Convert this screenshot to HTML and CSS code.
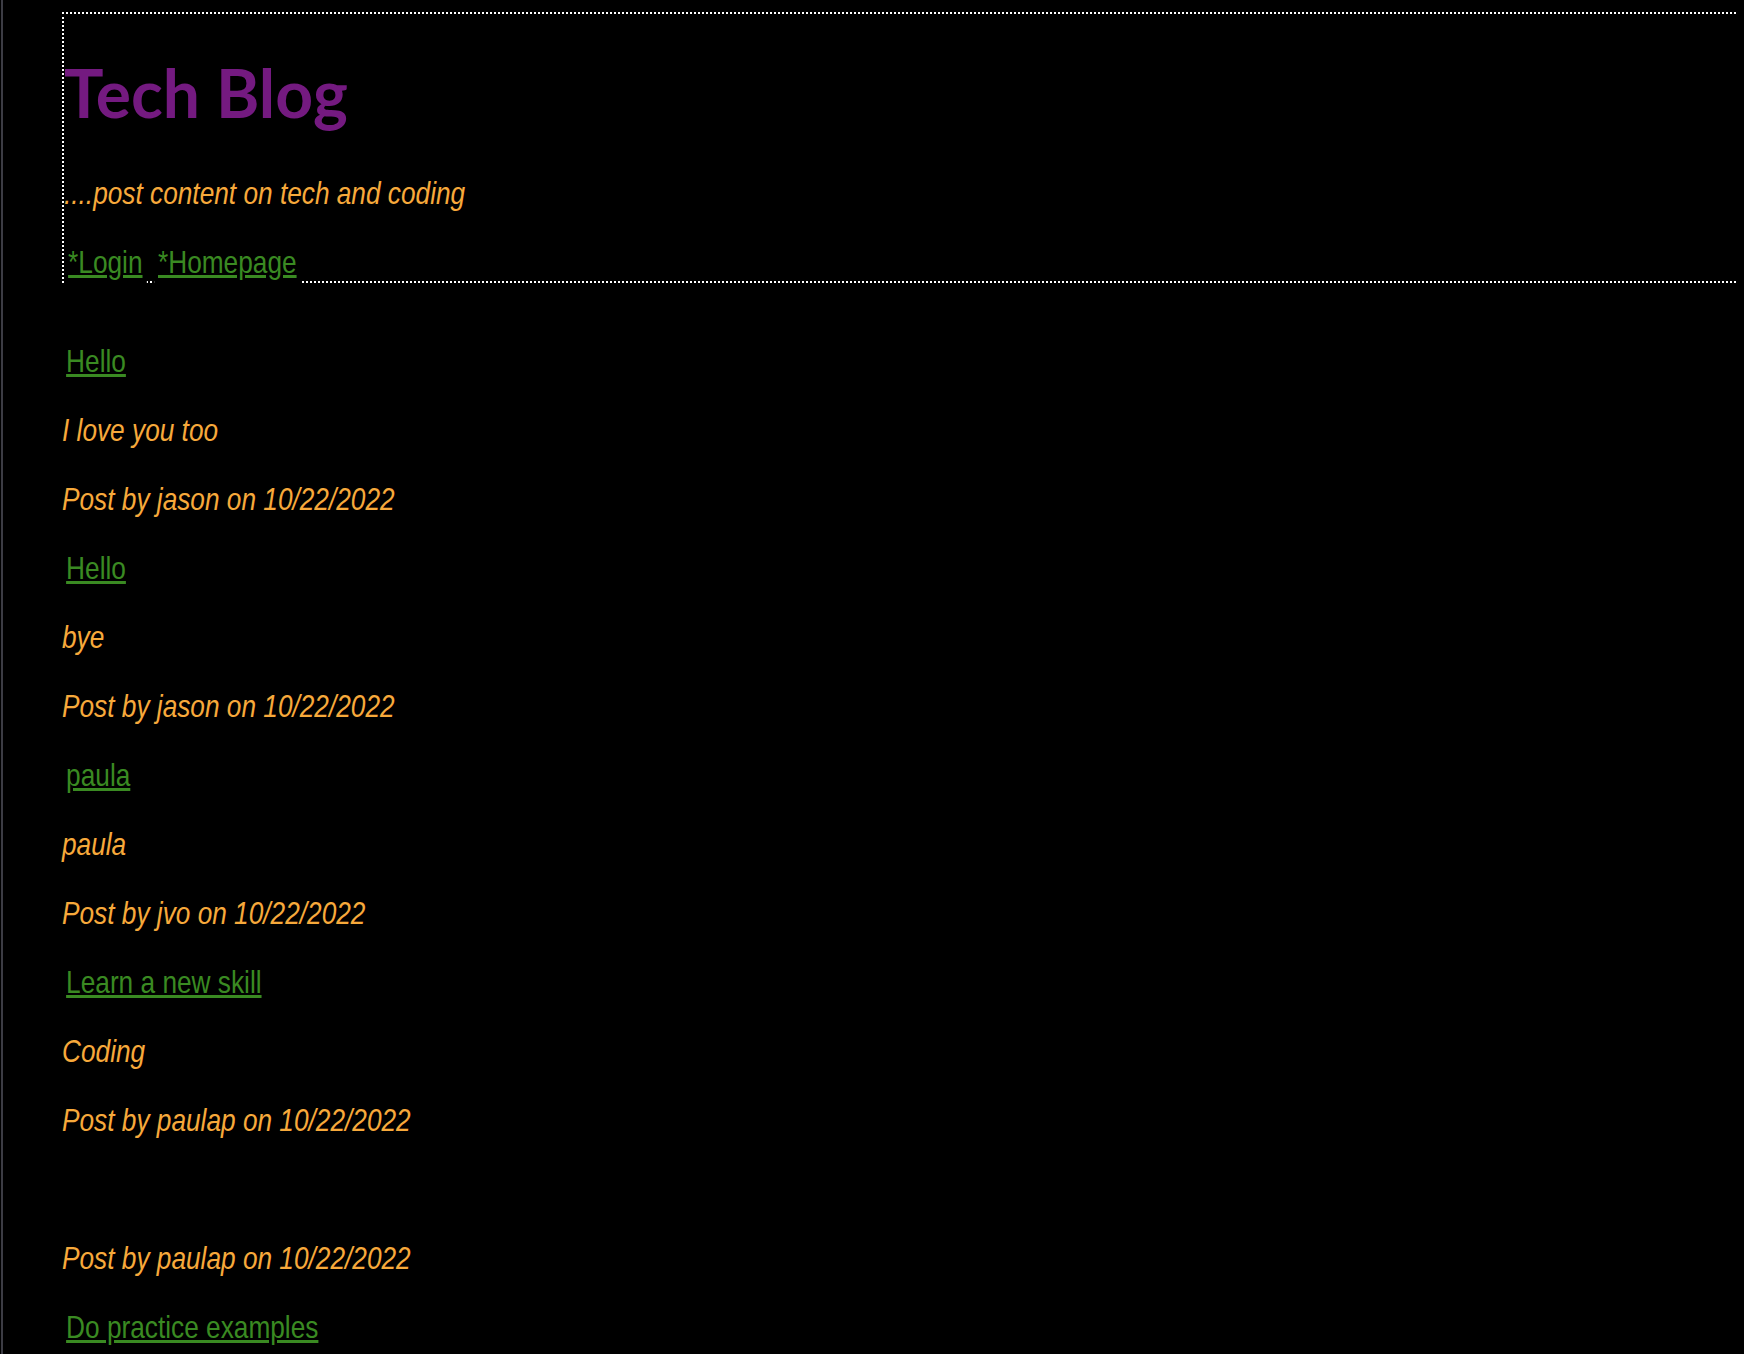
FILE: index.html
```html
<!DOCTYPE html>
<html lang="en">
<head>
<meta charset="utf-8">
<title>Tech Blog</title>
<link rel="stylesheet" href="styles.css">
</head>
<body>
<header class="site-header">
  <h1 class="site-title">Tech Blog</h1>
  <p class="tagline narrow">....post content on tech and coding</p>
  <nav class="nav narrow"><a class="link" href="#">*Login</a> <a class="link" href="#">*Homepage</a></nav>
</header>
<main class="posts">
  <article class="post">
    <p class="post-title narrow"><a class="link" href="#">Hello</a></p>
    <p class="post-text narrow">I love you too</p>
    <p class="post-text narrow">Post by jason on 10/22/2022</p>
  </article>
  <article class="post">
    <p class="post-title narrow"><a class="link" href="#">Hello</a></p>
    <p class="post-text narrow">bye</p>
    <p class="post-text narrow">Post by jason on 10/22/2022</p>
  </article>
  <article class="post">
    <p class="post-title narrow"><a class="link" href="#">paula</a></p>
    <p class="post-text narrow">paula</p>
    <p class="post-text narrow">Post by jvo on 10/22/2022</p>
  </article>
  <article class="post">
    <p class="post-title narrow"><a class="link" href="#">Learn a new skill</a></p>
    <p class="post-text narrow">Coding</p>
    <p class="post-text narrow">Post by paulap on 10/22/2022</p>
  </article>
  <article class="post">
    <p class="post-text narrow">&nbsp;</p>
    <p class="post-text narrow">Post by paulap on 10/22/2022</p>
  </article>
  <article class="post">
    <p class="post-title narrow"><a class="link" href="#">Do practice examples</a></p>
  </article>
</main>
</body>
</html>
```
FILE: styles.css
```css
html {
  background: linear-gradient(to right, #000 0, #000 1px, #3c3c44 1px, #3c3c44 3px, #000 3px) #000;
  min-height: 100%;
  overflow: hidden;
}

body {
  margin: 8px;
  font-family: "Liberation Sans", Arial, sans-serif;
  font-size: 32px;
  color: #f7a93b;
}

.narrow {
  transform: scaleX(0.82);
  transform-origin: left center;
}

.site-header {
  margin: 4px -8px 0 54px;
  border: 2px dotted #ffffff;
  border-right: none;
}

.site-title {
  margin: 40px 0 44px;
  font-family: Lato, "Open Sans", sans-serif;
  font-weight: 700;
  font-size: 66px;
  line-height: 77px;
  color: #741a80;
}

.tagline {
  margin: 0 0 32px;
  font-style: italic;
}

.nav {
  margin: 0;
}

.link {
  padding: 4px 5px;
  background: #000;
  color: #3a8a22;
  text-decoration: underline;
}

.posts {
  padding: 28px 0 0 54px;
}

.post-title,
.post-text {
  margin: 32px 0;
}

.post-text {
  font-style: italic;
}
```
